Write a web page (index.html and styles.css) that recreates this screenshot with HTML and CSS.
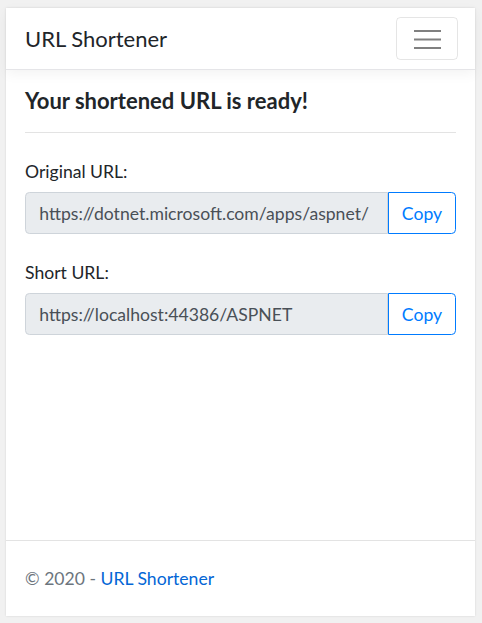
FILE: index.html
```html
<!DOCTYPE html>
<html lang="en">
<head>
<meta charset="utf-8">
<title>URL Shortener</title>
<link rel="stylesheet" href="styles.css">
</head>
<body>
<div class="card">
  <header class="navbar">
    <span class="brand">URL Shortener</span>
    <button class="toggler" type="button" aria-label="Toggle navigation">
      <svg width="27" height="20" viewBox="0 0 27 20">
        <path d="M0 2H27M0 10.5H27M0 19H27" stroke="#808080" stroke-width="2.2" fill="none"/>
      </svg>
    </button>
  </header>
  <main class="main">
    <h5 class="title">Your shortened URL is ready!</h5>
    <hr class="rule">
    <div class="group">
      <label class="label">Original URL:</label>
      <div class="input-group">
        <input class="field" type="text" readonly value="https://dotnet.microsoft.com/apps/aspnet/">
        <button class="copy" type="button">Copy</button>
      </div>
    </div>
    <div class="group">
      <label class="label">Short URL:</label>
      <div class="input-group">
        <input class="field" type="text" readonly value="https://localhost:44386/ASPNET">
        <button class="copy" type="button">Copy</button>
      </div>
    </div>
  </main>
  <footer class="footer">
    <span>© 2020 - <a class="link" href="#">URL Shortener</a></span>
  </footer>
</div>
</body>
</html>
```

FILE: styles.css
```css
* { box-sizing: border-box; }
html, body { margin: 0; padding: 0; }
body {
  background: #f1f1f1;
  font-family: "Segoe UI", Lato, "Open Sans", sans-serif;
  font-size: 17.6px;
  color: #212529;
  padding: 8px 7px 7px 6px;
}
.card {
  background: #fff;
  width: 469px;
  height: 608px;
  display: flex;
  flex-direction: column;
  box-shadow: 0 0 2px rgba(0,0,0,0.12);
}
.navbar {
  height: 62px;
  border-bottom: 1px solid #e5e5e8;
  box-shadow: 0 4px 12px rgba(0,0,0,0.05);
  display: flex;
  align-items: center;
  justify-content: space-between;
  padding: 0 17px 0 19px;
  position: relative;
  z-index: 1;
}
.brand {
  font-size: 22px;
  line-height: 33px;
  color: #212529;
}
.toggler {
  width: 62px;
  height: 43px;
  border: 1px solid rgba(0,0,0,0.1);
  border-radius: 4.4px;
  background: transparent;
  display: flex;
  align-items: center;
  justify-content: center;
  padding: 0;
}
.main {
  flex: 1;
  padding: 18px 19px 0 19px;
}
.title {
  margin: 0;
  font-size: 22px;
  font-weight: 700;
  line-height: 26px;
}
.rule {
  margin: 18px 0 0 0;
  border: 0;
  border-top: 1px solid #e3e3e3;
}
.group { margin-top: 26px; }
.label {
  display: block;
  line-height: 26px;
  margin-bottom: 7px;
}
.input-group {
  display: flex;
  height: 42px;
}
.field {
  flex: 1;
  min-width: 0;
  font: inherit;
  color: #495057;
  background: #e9ecef;
  border: 1px solid #ced4da;
  border-radius: 4.4px 0 0 4.4px;
  padding: 0 13.2px;
  height: 42px;
}
.copy {
  font: inherit;
  color: #007bff;
  background: #fff;
  border: 1px solid #007bff;
  border-radius: 0 4.4px 4.4px 0;
  width: 68px;
  height: 42px;
  padding: 0;
}
.footer {
  height: 76px;
  border-top: 1px solid #e3e3e3;
  display: flex;
  align-items: center;
  padding: 0 19px;
  color: #6c757d;
  line-height: 26px;
}
.link { color: #0366d6; text-decoration: none; }
```
